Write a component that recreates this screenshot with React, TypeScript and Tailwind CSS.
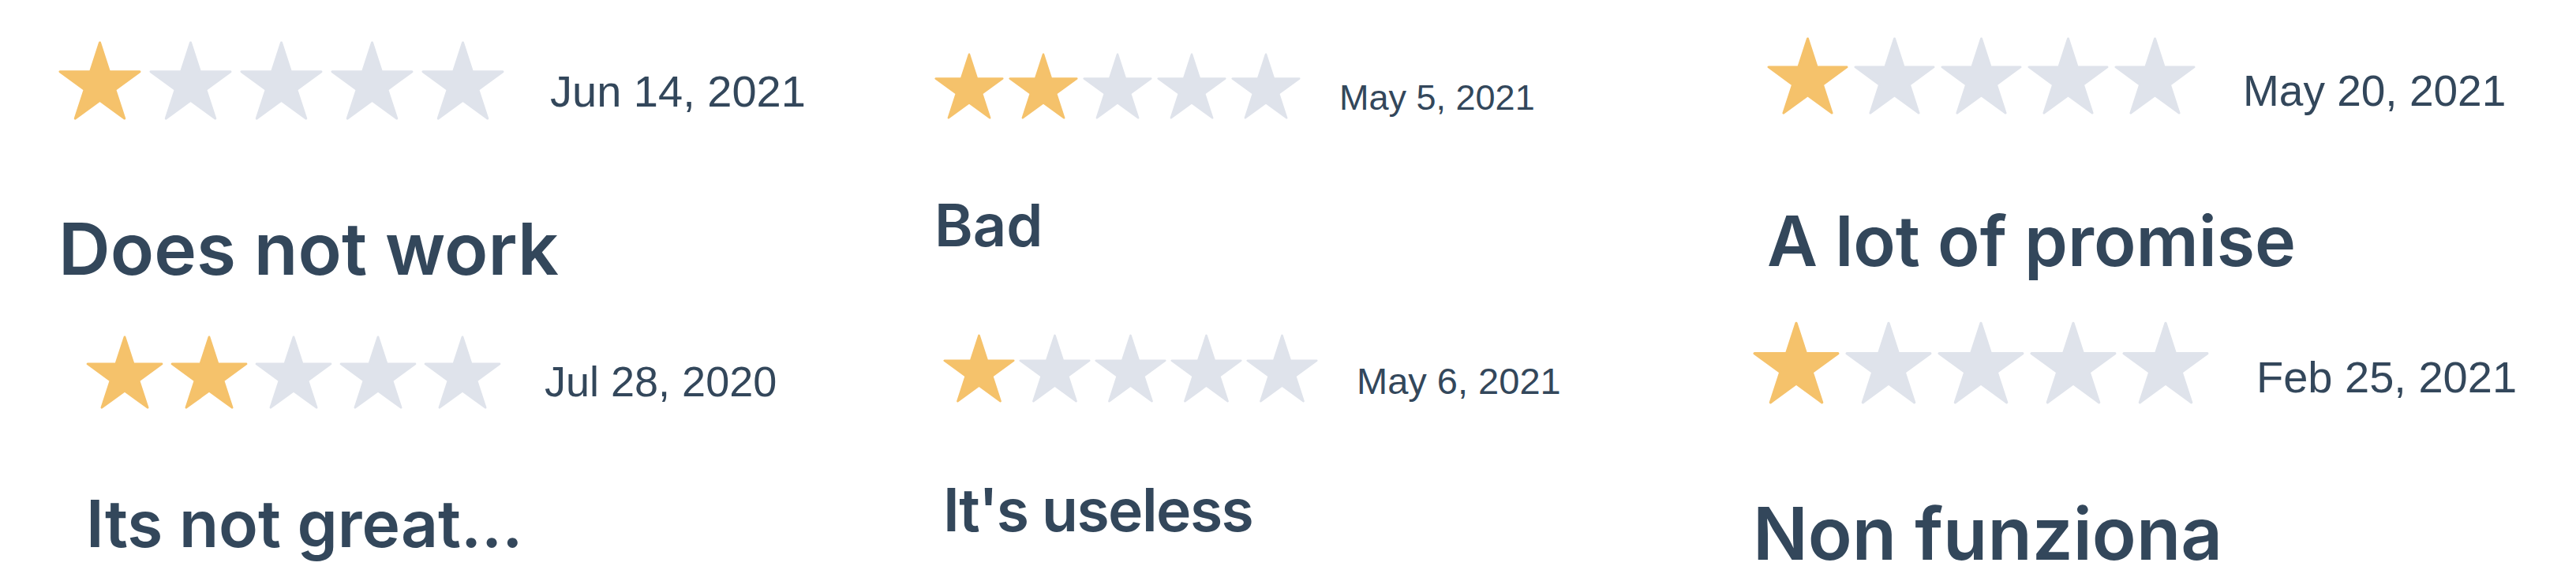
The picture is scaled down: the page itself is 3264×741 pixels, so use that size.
type Review = {
  rating: number;
  date: string;
  title: string;
  cell: string;
  stars: string;
  star: string;
  dateStyle: string;
  titleStyle: string;
};

const reviews: Review[] = [
  {
    rating: 1,
    date: "Jun 14, 2021",
    title: "Does not work",
    cell: "pl-[74px] pt-[52px]",
    stars: "gap-[10px]",
    star: "w-[105px] h-[100px]",
    dateStyle: "ml-[58px] mt-[36px] text-[56px]",
    titleStyle: "mt-[118px] text-[91px]",
  },
  {
    rating: 2,
    date: "May 5, 2021",
    title: "Bad",
    cell: "pl-[84px] pt-[67px]",
    stars: "gap-[6px]",
    star: "w-[88px] h-[84px]",
    dateStyle: "ml-[49px] mt-[34px] text-[45px]",
    titleStyle: "mt-[97px] text-[74px]",
  },
  {
    rating: 1,
    date: "May 20, 2021",
    title: "A lot of promise",
    cell: "pl-[89px] pt-[47px]",
    stars: "gap-[7px]",
    star: "w-[103px] h-[98px]",
    dateStyle: "ml-[60px] mt-[41px] text-[55px]",
    titleStyle: "mt-[116px] text-[88px]",
  },
  {
    rating: 2,
    date: "Jul 28, 2020",
    title: "Its not great...",
    cell: "pl-[109px] pt-[55px]",
    stars: "gap-[9px]",
    star: "w-[98px] h-[93px]",
    dateStyle: "ml-[55px] mt-[31px] text-[54px]",
    titleStyle: "mt-[105px] text-[82px]",
  },
  {
    rating: 1,
    date: "May 6, 2021",
    title: "It's useless",
    cell: "pl-[95px] pt-[53px]",
    stars: "gap-[5px]",
    star: "w-[91px] h-[87px]",
    dateStyle: "ml-[49px] mt-[36px] text-[47px]",
    titleStyle: "mt-[98px] text-[75px] tracking-[-1.5px]",
  },
  {
    rating: 1,
    date: "Feb 25, 2021",
    title: "Non funziona",
    cell: "pl-[71px] pt-[37px]",
    stars: "gap-[7px]",
    star: "w-[110px] h-[105px]",
    dateStyle: "ml-[60px] mt-[43px] text-[56px]",
    titleStyle: "mt-[118px] text-[92px]",
  },
];

const Star = ({ filled, className }: { filled: boolean; className: string }) => (
  <svg
    viewBox="-2 -2 104 99"
    className={`${className} shrink-0 ${
      filled ? "fill-[#f5c26b] stroke-[#f5c26b]" : "fill-[#dfe3eb] stroke-[#dfe3eb]"
    }`}
    strokeWidth={3}
    strokeLinejoin="round"
  >
    <path d="M50 0 L61.8 36.3 L100 36.3 L69.1 58.8 L80.9 95.1 L50 72.6 L19.1 95.1 L30.9 58.8 L0 36.3 L38.2 36.3 Z" />
  </svg>
);

const ReviewCard = ({ review }: { review: Review }) => {
  return (
    <div className={`flex flex-col ${review.cell}`}>
      <div className="flex items-start">
        <div className={`flex ${review.stars}`}>
          {[1, 2, 3, 4, 5].map((n) => (
            <Star key={n} filled={n <= review.rating} className={review.star} />
          ))}
        </div>
        <p
          className={`${review.dateStyle} leading-none whitespace-nowrap text-[#33475b] font-['Liberation_Sans',Arial,sans-serif]`}
        >
          {review.date}
        </p>
      </div>
      <h3
        className={`${review.titleStyle} leading-none whitespace-nowrap font-semibold text-[#33475b] font-['Inter',sans-serif]`}
      >
        {review.title}
      </h3>
    </div>
  );
};

const App = () => {
  return (
    <div className="w-[3264px] h-[741px] bg-white overflow-hidden">
      <div className="grid grid-cols-[1100px_1050px_1114px] grid-rows-[370px_371px]">
        {reviews.map((review) => (
          <ReviewCard key={review.date} review={review} />
        ))}
      </div>
    </div>
  );
};

export default App;
